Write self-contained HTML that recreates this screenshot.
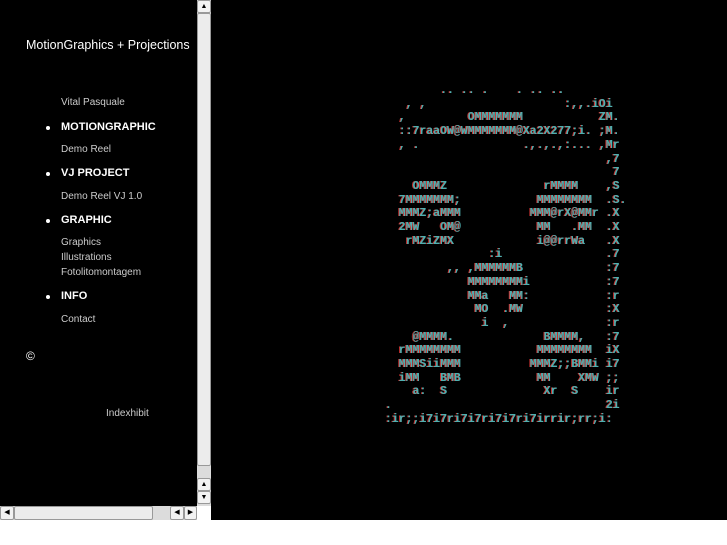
<!DOCTYPE html>
<html><head><meta charset="utf-8"><style>
body{margin:0;width:727px;height:545px;background:#fff;position:relative;overflow:hidden;font-family:"Liberation Sans",sans-serif}
#right{position:absolute;left:211px;top:0;width:516px;height:520px;background:#000}
#left{position:absolute;left:0;top:0;width:197px;height:506px;background:#000;color:#ddd}
.t{position:absolute;left:26px;top:38px;font-size:12.5px;color:#fff;white-space:nowrap}
.i{position:absolute;left:61px;font-size:10px;color:#ccc;white-space:nowrap}
.h{position:absolute;left:61px;font-size:11px;font-weight:bold;color:#fff;white-space:nowrap}
.b{position:absolute;left:46px;width:4px;height:4px;border-radius:2px;background:#fff}
#vs{position:absolute;left:197px;top:0;width:14px;height:506px;background:#dcdcdc}
#hs{position:absolute;left:0;top:506px;width:197px;height:14px;background:#dcdcdc}
.btn{position:absolute;background:#f2f2f2;border:1px solid #999;box-sizing:border-box;border-radius:2px}
pre{position:absolute;left:385px;top:84px;margin:0;font-family:"Liberation Mono",monospace;font-size:11.5px;line-height:13.7px;color:#4fb0b0;text-shadow:-1px 0 #c33;font-weight:bold}
</style></head><body>
<div id="left">
<div class="t">MotionGraphics + Projections</div>
<div class="i" style="top:97px">Vital Pasquale</div>
<div class="b" style="top:126px"></div><div class="h" style="top:121px">MOTIONGRAPHIC</div>
<div class="i" style="top:144px">Demo Reel</div>
<div class="b" style="top:172px"></div><div class="h" style="top:167px">VJ PROJECT</div>
<div class="i" style="top:191px">Demo Reel VJ 1.0</div>
<div class="b" style="top:219px"></div><div class="h" style="top:214px">GRAPHIC</div>
<div class="i" style="top:237px">Graphics</div>
<div class="i" style="top:252px">Illustrations</div>
<div class="i" style="top:267px">Fotolitomontagem</div>
<div class="b" style="top:295px"></div><div class="h" style="top:290px">INFO</div>
<div class="i" style="top:314px">Contact</div>
<div style="position:absolute;left:26px;top:349px;font-size:12px;color:#fff">©</div>
<div class="i" style="left:106px;top:408px">Indexhibit</div>
</div>
<div id="vs">
<div class="btn" style="left:0;top:0;width:14px;height:13px;font-size:7px;text-align:center;line-height:11px">▲</div>
<div class="btn" style="left:0;top:13px;width:14px;height:453px;background:#ececec"></div>
<div class="btn" style="left:0;top:478px;width:14px;height:13px;font-size:7px;text-align:center;line-height:11px">▲</div>
<div class="btn" style="left:0;top:491px;width:14px;height:13px;font-size:7px;text-align:center;line-height:11px">▼</div>
</div>
<div id="hs">
<div class="btn" style="left:0;top:0;width:14px;height:14px;font-size:7px;text-align:center;line-height:12px">◀</div>
<div class="btn" style="left:14px;top:0;width:139px;height:14px;background:#ececec"></div>
<div class="btn" style="left:170px;top:0;width:14px;height:14px;font-size:7px;text-align:center;line-height:12px">◀</div>
<div class="btn" style="left:184px;top:0;width:13px;height:14px;font-size:7px;text-align:center;line-height:12px">▶</div>
</div>
<div id="right"></div>
<pre>        .. .. .    . .. ..
   , ,                    :,,.iOi
  ,         OMMMMMMM           ZM.
  ::7raaOW@WMMMMMMM@Xa2X277;i. ;M.
  , .               .,.,.,:... ,Mr
                                ,7
                                 7
    OMMMZ              rMMMM    ,S
  7MMMMMMM;           MMMMMMMM  .S.
  MMMZ;aMMM          MMM@rX@MMr .X
  2MW   OM@           MM   .MM  .X
   rMZiZMX            i@@rrWa   .X
               :i               .7
         ,, ,MMMMMMB            :7
            MMMMMMMMi           :7
            MMa   MM:           :r
             MO  .MW            :X
              i  ,              :r
    @MMMM.             BMMMM,   :7
  rMMMMMMMM           MMMMMMMM  iX
  MMMSiiMMM          MMMZ;;BMMi i7
  iMM   BMB           MM    XMW ;;
    a:  S              Xr  S    ir
.                               2i
:ir;;i7i7ri7i7ri7i7ri7irrir;rr;i:</pre>
</body></html>
